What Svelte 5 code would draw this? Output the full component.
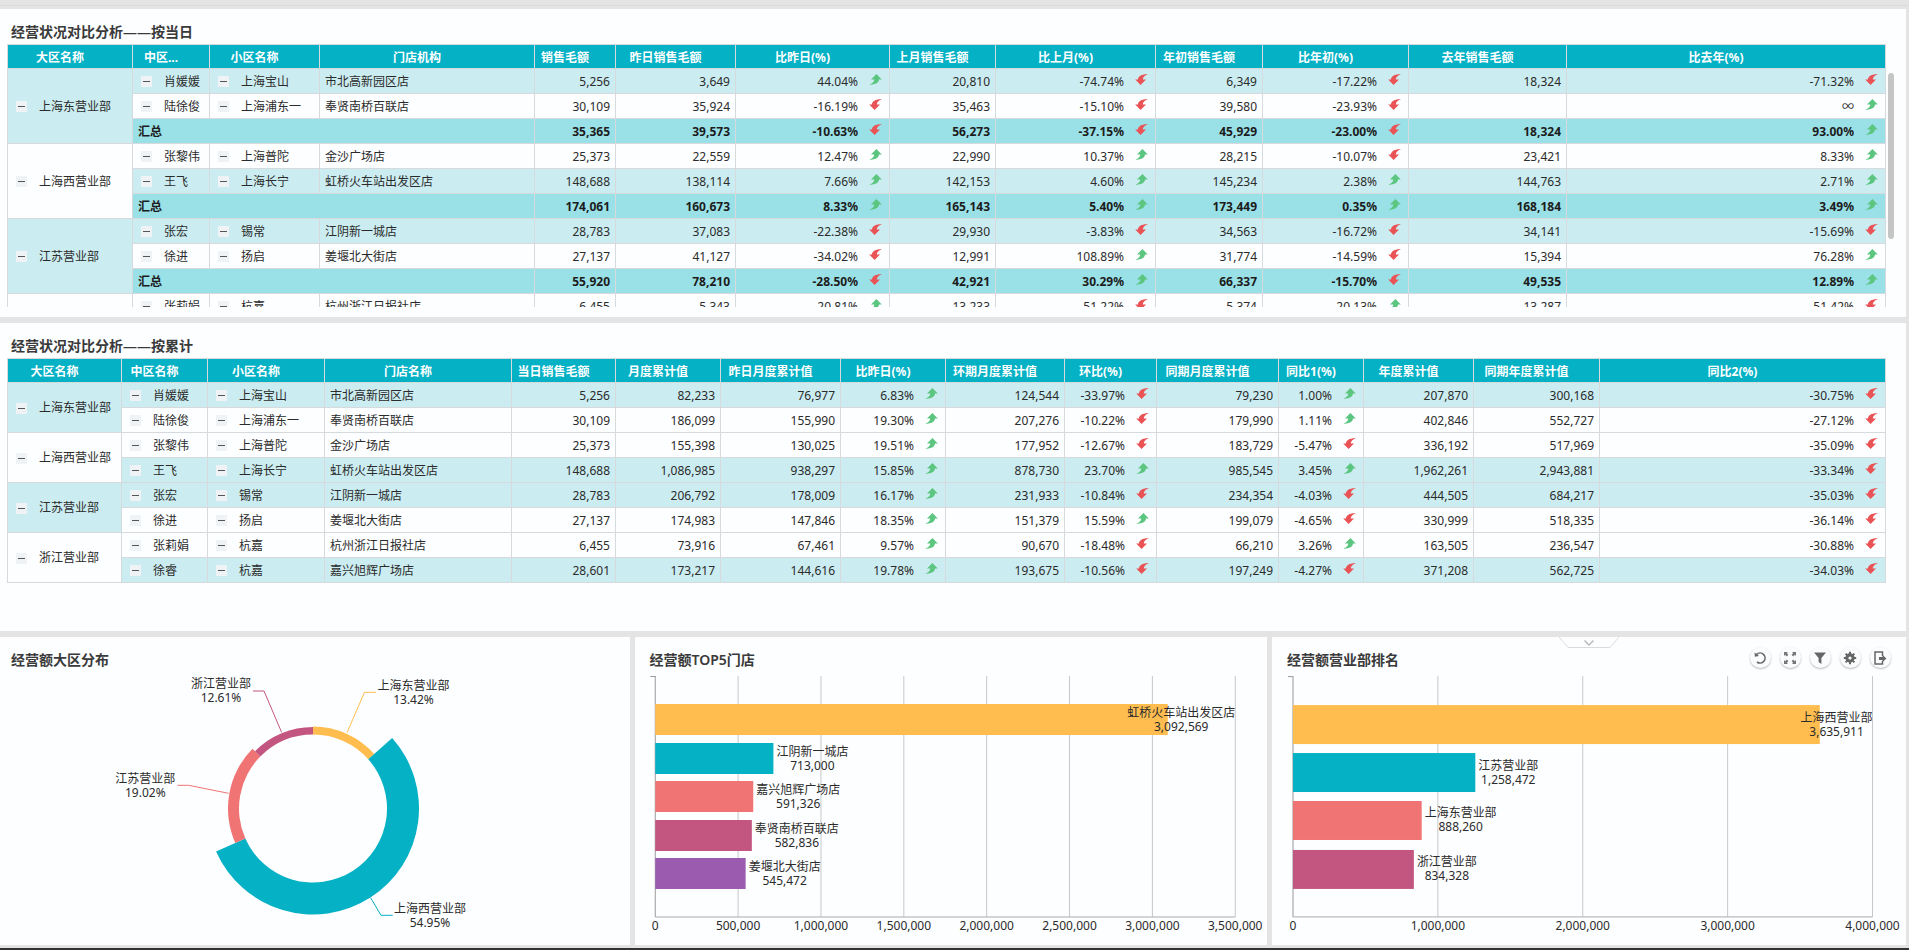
<script>
	const dayCols = [125, 77, 110, 215, 81, 120, 154, 106, 160, 107, 146, 158, 319];
	const dayHeads = ['大区名称', '中区...', '小区名称', '门店机构', '销售毛额', '昨日销售毛额', '比昨日(%)', '上月销售毛额', '比上月(%)', '年初销售毛额', '比年初(%)', '去年销售毛额', '比去年(%)'];
	const dayGroups = [
		{
			name: '上海东营业部',
			rows: [
				['肖媛媛', '上海宝山', '市北高新园区店', '5,256', '3,649', '44.04%', '20,810', '-74.74%', '6,349', '-17.22%', '18,324', '-71.32%'],
				['陆徐俊', '上海浦东一', '奉贤南桥百联店', '30,109', '35,924', '-16.19%', '35,463', '-15.10%', '39,580', '-23.93%', '', '∞']
			],
			sum: ['35,365', '39,573', '-10.63%', '56,273', '-37.15%', '45,929', '-23.00%', '18,324', '93.00%']
		},
		{
			name: '上海西营业部',
			rows: [
				['张黎伟', '上海普陀', '金沙广场店', '25,373', '22,559', '12.47%', '22,990', '10.37%', '28,215', '-10.07%', '23,421', '8.33%'],
				['王飞', '上海长宁', '虹桥火车站出发区店', '148,688', '138,114', '7.66%', '142,153', '4.60%', '145,234', '2.38%', '144,763', '2.71%']
			],
			sum: ['174,061', '160,673', '8.33%', '165,143', '5.40%', '173,449', '0.35%', '168,184', '3.49%']
		},
		{
			name: '江苏营业部',
			rows: [
				['张宏', '锡常', '江阴新一城店', '28,783', '37,083', '-22.38%', '29,930', '-3.83%', '34,563', '-16.72%', '34,141', '-15.69%'],
				['徐进', '扬启', '姜堰北大街店', '27,137', '41,127', '-34.02%', '12,991', '108.89%', '31,774', '-14.59%', '15,394', '76.28%']
			],
			sum: ['55,920', '78,210', '-28.50%', '42,921', '30.29%', '66,337', '-15.70%', '49,535', '12.89%']
		},
		{
			// the rest of this group sits below the scroll edge
			name: '浙江营业部',
			rows: [
				['张莉娟', '杭嘉', '杭州浙江日报社店', '6,455', '5,343', '20.81%', '13,233', '-51.22%', '5,374', '20.13%', '13,287', '-51.42%'],
				['徐睿', '杭嘉', '嘉兴旭辉广场店', '28,601', '', '', '', '', '', '', '', '']
			],
			sum: ['', '', '', '', '', '', '', '', '']
		}
	];

	const totalCols = [114, 86, 117, 187, 104, 105, 120, 105, 119, 92, 122, 85, 110, 126, 286];
	const totalHeads = ['大区名称', '中区名称', '小区名称', '门店名称', '当日销售毛额', '月度累计值', '昨日月度累计值', '比昨日(%)', '环期月度累计值', '环比(%)', '同期月度累计值', '同比1(%)', '年度累计值', '同期年度累计值', '同比2(%)'];
	const totalGroups = [
		{
			name: '上海东营业部',
			rows: [
				['肖媛媛', '上海宝山', '市北高新园区店', '5,256', '82,233', '76,977', '6.83%', '124,544', '-33.97%', '79,230', '1.00%', '207,870', '300,168', '-30.75%'],
				['陆徐俊', '上海浦东一', '奉贤南桥百联店', '30,109', '186,099', '155,990', '19.30%', '207,276', '-10.22%', '179,990', '1.11%', '402,846', '552,727', '-27.12%']
			]
		},
		{
			name: '上海西营业部',
			rows: [
				['张黎伟', '上海普陀', '金沙广场店', '25,373', '155,398', '130,025', '19.51%', '177,952', '-12.67%', '183,729', '-5.47%', '336,192', '517,969', '-35.09%'],
				['王飞', '上海长宁', '虹桥火车站出发区店', '148,688', '1,086,985', '938,297', '15.85%', '878,730', '23.70%', '985,545', '3.45%', '1,962,261', '2,943,881', '-33.34%']
			]
		},
		{
			name: '江苏营业部',
			rows: [
				['张宏', '锡常', '江阴新一城店', '28,783', '206,792', '178,009', '16.17%', '231,933', '-10.84%', '234,354', '-4.03%', '444,505', '684,217', '-35.03%'],
				['徐进', '扬启', '姜堰北大街店', '27,137', '174,983', '147,846', '18.35%', '151,379', '15.59%', '199,079', '-4.65%', '330,999', '518,335', '-36.14%']
			]
		},
		{
			name: '浙江营业部',
			rows: [
				['张莉娟', '杭嘉', '杭州浙江日报社店', '6,455', '73,916', '67,461', '9.57%', '90,670', '-18.48%', '66,210', '3.26%', '163,505', '236,547', '-30.88%'],
				['徐睿', '杭嘉', '嘉兴旭辉广场店', '28,601', '173,217', '144,616', '19.78%', '193,675', '-10.56%', '197,249', '-4.27%', '371,208', '562,725', '-34.03%']
			]
		}
	];

	const amber = '#ffbd50';
	const teal = '#04b1c5';
	const coral = '#f07474';
	const rose = '#c35680';
	const violet = '#9b5cb0';

	const isPct = (v) => v.endsWith('%') || v === '∞';
	const isDown = (v) => v.startsWith('-');

	// donut, angles clockwise from 12 o'clock, rose-type outer radius
	const cx = 313;
	const cy = 808.5;
	const inner = 74;

	function point(r, deg) {
		const a = (deg * Math.PI) / 180;
		return `${cx + r * Math.sin(a)} ${cy - r * Math.cos(a)}`;
	}

	function sector(from, to, outer) {
		const big = to - from > 180 ? 1 : 0;
		return `M${point(outer, from)} A${outer} ${outer} 0 ${big} 1 ${point(outer, to)} L${point(inner, to)} A${inner} ${inner} 0 ${big} 0 ${point(inner, from)} Z`;
	}

	const slices = [
		{ color: amber, pct: 13.42, outer: 82, line: '347,732.7 364.5,692.3 376,692.3', name: '上海东营业部', lx: 413.5, ly: 686 },
		{ color: teal, pct: 54.95, outer: 106, line: '370.6,897.7 381,915.3 392.7,915.3', name: '上海西营业部', lx: 430, ly: 909 },
		{ color: coral, pct: 19.02, outer: 85, line: '228.6,793.3 188.6,785.3 177.5,785.3', name: '江苏营业部', lx: 145.3, ly: 779 },
		{ color: rose, pct: 12.61, outer: 81.5, line: '281.6,732.3 264,691 253,691', name: '浙江营业部', lx: 221, ly: 683.5 }
	];
	let start = 0;
	for (const s of slices) {
		s.from = start;
		start += (s.pct / 100) * 360;
		s.to = start;
	}

	function buildBars(x0, max, bars) {
		const width = 580;
		return bars.map((b) => {
			const w = (b.value / max) * width;
			const lw = b.name.length * 12;
			return { ...b, w, tx: Math.min(x0 + w + 3 + lw / 2, x0 + width - lw / 2) };
		});
	}

	const storeBars = buildBars(655, 3500000, [
		{ name: '虹桥火车站出发区店', value: 3092569, label: '3,092,569', y: 704, h: 31, color: amber },
		{ name: '江阴新一城店', value: 713000, label: '713,000', y: 743, h: 31, color: teal },
		{ name: '嘉兴旭辉广场店', value: 591326, label: '591,326', y: 781, h: 31, color: coral },
		{ name: '奉贤南桥百联店', value: 582836, label: '582,836', y: 820, h: 31, color: rose },
		{ name: '姜堰北大街店', value: 545472, label: '545,472', y: 858, h: 31, color: violet }
	]);
	const storeTicks = [0, 500000, 1000000, 1500000, 2000000, 2500000, 3000000, 3500000];

	const deptBars = buildBars(1293, 4000000, [
		{ name: '上海西营业部', value: 3635911, label: '3,635,911', y: 705, h: 39, color: amber },
		{ name: '江苏营业部', value: 1258472, label: '1,258,472', y: 753, h: 39, color: teal },
		{ name: '上海东营业部', value: 888260, label: '888,260', y: 801, h: 39, color: coral },
		{ name: '浙江营业部', value: 834328, label: '834,328', y: 850, h: 39, color: rose }
	]);
	const deptTicks = [0, 1000000, 2000000, 3000000, 4000000];

	const charts = [
		{ title: '经营额TOP5门店', box: '635 670 632 275', x0: 655, max: 3500000, bars: storeBars, ticks: storeTicks },
		{ title: '经营额营业部排名', box: '1272 670 634 275', x0: 1293, max: 4000000, bars: deptBars, ticks: deptTicks, tools: true }
	];
</script>

{#snippet arrow(value)}
	<svg class="arrow" viewBox="0 0 13 11" aria-hidden="true">
		{#if isDown(value)}
			<path fill="#ea5356" transform="rotate(180 6.5 5.5)" d="M7.4 0 L12.8 5.5 H10 C10 8.6 6 11 0.2 10.6 C3.4 9.6 5.2 8 5.2 5.5 H2 Z" />
		{:else}
			<path fill="#5cc680" d="M7.4 0 L12.8 5.5 H10 C10 8.6 6 11 0.2 10.6 C3.4 9.6 5.2 8 5.2 5.5 H2 Z" />
		{/if}
	</svg>
{/snippet}

{#snippet valueCell(v)}
	<td class="num">
		{#if isPct(v)}
			<span class="pct">{v}{@render arrow(v)}</span>
		{:else}
			{v}
		{/if}
	</td>
{/snippet}

{#snippet tree(text)}
	<span class="tree"><i class="minus"></i>{text}</span>
{/snippet}

<div class="page">
	<div class="top-strip"></div>

	<section class="panel day">
		<h2>经营状况对比分析——按当日</h2>
		<div class="scroll">
			<table>
				<colgroup>
					{#each dayCols as w}<col style="width: {w}px" />{/each}
				</colgroup>
				<thead>
					<tr>{#each dayHeads as h}<th>{h}</th>{/each}</tr>
				</thead>
				<tbody>
					{#each dayGroups as g, i}
						{#each g.rows as r, j}
							<tr class:light={(i + j) % 2 === 0}>
								{#if j === 0}
									<td class="group" class:light={i % 2 === 0} rowspan="3">{@render tree(g.name)}</td>
								{/if}
								<td>{@render tree(r[0])}</td>
								<td>{@render tree(r[1])}</td>
								<td class="store">{r[2]}</td>
								{#each r.slice(3) as v}{@render valueCell(v)}{/each}
							</tr>
						{/each}
						<tr class="sum">
							<td class="store" colspan="3">汇总</td>
							{#each g.sum as v}{@render valueCell(v)}{/each}
						</tr>
					{/each}
				</tbody>
			</table>
			<div class="scrollbar"></div>
		</div>
	</section>

	<section class="panel total">
		<h2>经营状况对比分析——按累计</h2>
		<table>
			<colgroup>
				{#each totalCols as w}<col style="width: {w}px" />{/each}
			</colgroup>
			<thead>
				<tr>{#each totalHeads as h}<th>{h}</th>{/each}</tr>
			</thead>
			<tbody>
				{#each totalGroups as g, i}
					{#each g.rows as r, j}
						<tr class:light={(i + j) % 2 === 0}>
							{#if j === 0}
								<td class="group" class:light={i % 2 === 0} rowspan="2">{@render tree(g.name)}</td>
							{/if}
							<td>{@render tree(r[0])}</td>
							<td>{@render tree(r[1])}</td>
							<td class="store">{r[2]}</td>
							{#each r.slice(3) as v}{@render valueCell(v)}{/each}
						</tr>
					{/each}
				{/each}
			</tbody>
		</table>
	</section>

	<div class="charts">
		<section class="panel chart">
			<h3>经营额大区分布</h3>
			<svg viewBox="0 670 629.5 275">
				{#each slices as s}
					<path d={sector(s.from, s.to, s.outer)} fill={s.color} />
					<polyline points={s.line} fill="none" stroke={s.color} />
					<text x={s.lx} y={s.ly + 4} text-anchor="middle">{s.name}</text>
					<text x={s.lx} y={s.ly + 18} text-anchor="middle">{s.pct.toFixed(2)}%</text>
				{/each}
			</svg>
		</section>

		{#each charts as c}
			<section class="panel chart">
				<h3>{c.title}</h3>
				<svg viewBox={c.box}>
					{#each c.ticks as t}
						{@const x = c.x0 + (t / c.max) * 580}
						<line x1={x} x2={x} y1="676" y2="917" stroke={t === 0 ? '#999' : '#c8c8c8'} />
						<text {x} y="930" text-anchor="middle">{t.toLocaleString('en-US')}</text>
					{/each}
					<line x1={c.x0 - 5} x2={c.x0} y1="676.5" y2="676.5" stroke="#999" />
					<line x1={c.x0} x2={c.x0 + 580} y1="917" y2="917" stroke="#aaa" />
					{#each c.bars as b}
						<rect x={c.x0} y={b.y} width={b.w} height={b.h} fill={b.color} />
						<text x={b.tx} y={b.y + b.h / 2 - 3} text-anchor="middle">{b.name}</text>
						<text x={b.tx} y={b.y + b.h / 2 + 11} text-anchor="middle">{b.label}</text>
					{/each}
				</svg>
				{#if c.tools}
					<div class="fold"><svg viewBox="0 0 60 11"><path d="M0 0 L9 10.5 H51 L60 0" fill="#fdfeff" stroke="#d9dcdf" /><path d="M25.5 3.5 L30 8 L34.5 3.5" fill="none" stroke="#b5b8bb" stroke-width="1.4" /></svg></div>
					<div class="tools">
						<button aria-label="刷新">
							<svg viewBox="0 0 14 14"><path d="M3.6 3.4 A5 5 0 1 1 4 11" fill="none" stroke="#666" stroke-width="1.6" /><path d="M1.6 1.4 L1.8 5.8 L6 5" fill="#666" /></svg>
						</button>
						<button aria-label="全屏">
							<svg viewBox="0 0 14 14" fill="#777"><path d="M1 1 H5 L3.8 2.2 L5.4 3.8 L3.8 5.4 L2.2 3.8 L1 5 Z M13 1 V5 L11.8 3.8 L10.2 5.4 L8.6 3.8 L10.2 2.2 L9 1 Z M1 13 V9 L2.2 10.2 L3.8 8.6 L5.4 10.2 L3.8 11.8 L5 13 Z M13 13 H9 L10.2 11.8 L8.6 10.2 L10.2 8.6 L11.8 10.2 L13 9 Z" /></svg>
						</button>
						<button aria-label="筛选">
							<svg viewBox="0 0 14 14"><path d="M1 1.5 H13 L8.4 7 V13 L5.6 11 V7 Z" fill="#666" /></svg>
						</button>
						<button aria-label="设置">
							<svg viewBox="0 0 14 14"><circle cx="7" cy="7" r="3.4" fill="none" stroke="#666" stroke-width="2.6" /><path d="M7 .8 V13.2 M.8 7 H13.2 M2.6 2.6 L11.4 11.4 M11.4 2.6 L2.6 11.4" stroke="#666" stroke-width="2" /><circle cx="7" cy="7" r="1.6" fill="#fbfcfd" /></svg>
						</button>
						<button aria-label="导出">
							<svg viewBox="0 0 14 14"><path d="M9.5 5 V1 H2 V13 H9.5 V10" fill="none" stroke="#666" stroke-width="1.5" /><path d="M6 6 H9.5 V3.8 L13.4 7.5 L9.5 11.2 V9 H6 Z" fill="#666" /></svg>
						</button>
					</div>
				{/if}
			</section>
		{/each}
	</div>

	<div class="task-edge"></div>
</div>

<style>
	:global(body) {
		margin: 0;
		background: #e4e4e4;
		overflow: hidden;
	}

	.page {
		width: 1909px;
		height: 950px;
		display: flex;
		flex-direction: column;
		font-family: "Noto Sans", "Noto Sans CJK SC", sans-serif;
		font-size: 12px;
		color: #2b2b2b;
		overflow: hidden;
	}

	.top-strip {
		height: 5px;
		margin-bottom: 3px;
		border-bottom: 1px solid #dbdbdb;
	}

	.panel {
		background: #fdfeff;
		box-sizing: border-box;
		position: relative;
	}

	.day {
		width: 1906px;
		height: 308px;
		padding-bottom: 10px;
	}

	.total {
		width: 1906px;
		height: 308px;
		margin-top: 6px;
	}

	h2 {
		margin: 0;
		padding: 14px 0 3px 11px;
		height: 18px;
		font-size: 14px;
		line-height: 18px;
		font-weight: 600;
		color: #3a3a3a;
	}

	.scroll {
		position: relative;
		height: 263px;
		overflow: hidden;
	}

	.scrollbar {
		position: absolute;
		left: 1888px;
		top: 29px;
		width: 6px;
		height: 166px;
		border-radius: 3px;
		background: #c5c5c5;
	}

	table {
		margin-left: 7px;
		width: 1878px;
		table-layout: fixed;
		border-collapse: collapse;
	}

	th {
		height: 23px;
		padding: 0 20px 0 0;
		background: #04b1c5;
		border: 1px solid #d6dadd;
		color: #fff;
		font-size: 12px;
		font-weight: 700;
		text-align: center;
		white-space: nowrap;
		overflow: hidden;
	}

	td {
		height: 23px;
		padding: 1px 0 0;
		border: 1px solid #d6dadd;
		background: #fdfeff;
		line-height: 16px;
		white-space: nowrap;
		overflow: hidden;
	}

	tr.light td {
		background: #cbedf1;
	}

	tr td.group {
		background: #fdfeff;
	}

	tr td.group.light {
		background: #cbedf1;
	}

	tr.sum td {
		background: #9ae1e7;
		font-weight: 700;
		color: #1c1c1c;
	}

	td.store {
		padding-left: 5px;
	}

	td.num {
		padding-right: 5px;
		text-align: right;
	}

	.pct {
		display: flex;
		justify-content: flex-end;
		align-items: center;
		gap: 11px;
		padding-right: 2px;
	}

	.arrow {
		width: 13px;
		height: 11px;
		margin-bottom: 4px;
		flex: none;
	}

	.tree {
		display: flex;
		align-items: center;
		padding-left: 8px;
	}

	.minus {
		position: relative;
		width: 11px;
		height: 11px;
		margin-right: 12px;
		background: #eff3f6;
		flex: none;
	}

	.minus::after {
		content: "";
		position: absolute;
		left: 2px;
		right: 2px;
		top: 5px;
		height: 1px;
		background: #555;
	}

	.charts {
		display: grid;
		grid-template-columns: 629.5px 632.5px 633.5px;
		column-gap: 5px;
		margin-top: 6px;
	}

	.chart {
		height: 308px;
	}

	h3 {
		margin: 0;
		height: 33px;
		padding-left: 11px;
		box-sizing: border-box;
		font-size: 14px;
		line-height: 45px;
		font-weight: 600;
		color: #3a3a3a;
	}

	.chart:nth-child(2) h3 {
		padding-left: 15px;
	}

	.chart:nth-child(3) h3 {
		padding-left: 15px;
	}

	.chart > svg {
		display: block;
		width: 100%;
		height: 275px;
	}

	svg text {
		font-family: "Noto Sans", "Noto Sans CJK SC", sans-serif;
		font-size: 12px;
		fill: #2b2b2b;
	}

	.fold {
		position: absolute;
		left: 287px;
		top: 0;
		width: 60px;
		height: 11px;
	}

	.fold svg {
		display: block;
		width: 60px;
		height: 11px;
	}

	.tools {
		position: absolute;
		top: 10px;
		right: 15px;
		display: flex;
		gap: 9px;
	}

	.tools button {
		width: 21px;
		height: 21px;
		padding: 3.5px;
		border: none;
		border-radius: 50%;
		background: #fbfcfd;
		box-shadow: 0 1px 2px rgba(0, 0, 0, 0.28);
	}

	.tools svg {
		display: block;
		width: 14px;
		height: 14px;
	}

	.task-edge {
		height: 2px;
		margin-top: 3px;
		background: #333;
	}
</style>
